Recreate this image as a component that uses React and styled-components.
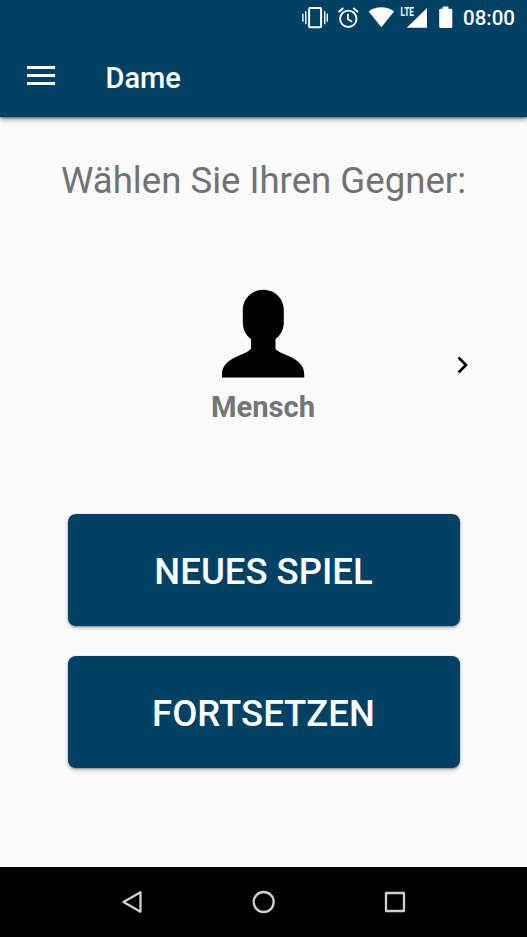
import React from "react";
import styled, { createGlobalStyle } from "styled-components";

const NAVY = "#004165";

const GlobalStyle = createGlobalStyle`
  body { margin: 0; background: #fafafa; }
  *, *::before, *::after { box-sizing: border-box; }
`;

const Screen = styled.div`
  display: flex;
  flex-direction: column;
  width: 527px;
  height: 937px;
  background: #fafafa;
  font-family: Roboto, sans-serif;
  overflow: hidden;
`;

const Header = styled.header`
  flex: none;
  height: 117px;
  background: ${NAVY};
  color: #fff;
  box-shadow: 0 1px 2px rgba(0, 0, 0, 0.45), 0 3px 5px rgba(0, 0, 0, 0.3);
`;

const StatusBar = styled.div`
  display: flex;
  align-items: center;
  justify-content: flex-end;
  height: 35px;
  padding-right: 12px;
`;

const StatusIcon = styled.svg`
  flex: none;
  display: block;
  width: ${(p) => p.$width}px;
  height: 35px;
  margin-right: ${(p) => p.$gap}px;
`;

const Network = styled.text`
  font: 700 12.5px Roboto, sans-serif;
`;

const Clock = styled.span`
  width: 52px;
  font-size: 20.5px;
  font-weight: 500;
  line-height: 35px;
  padding-top: 1px;
  white-space: nowrap;
`;

const AppBar = styled.div`
  display: flex;
  align-items: center;
  height: 82px;
  padding-left: 27px;
`;

const MenuButton = styled.button`
  display: flex;
  width: 28px;
  height: 20px;
  margin: 0 50.5px 0 0;
  padding: 0;
  border: 0;
  background: none;
  color: inherit;
`;

const Title = styled.h1`
  margin: 4px 0 0;
  font-size: 29px;
  font-weight: 500;
  line-height: 34px;
`;

const Main = styled.main`
  flex: 1;
  display: flex;
  flex-direction: column;
  align-items: center;
  width: 526px;
`;

const Heading = styled.h2`
  margin: 42px 0 0 1px;
  color: #727272;
  font-size: 36.6px;
  font-weight: 400;
  line-height: 44px;
  white-space: nowrap;
`;

const Picker = styled.section`
  display: grid;
  grid-template-columns: 1fr 104px 1fr;
  align-items: center;
  width: 100%;
  height: 152px;
  margin-top: 86px;
`;

const Opponent = styled.div`
  grid-column: 2;
  display: flex;
  flex-direction: column;
  align-items: center;
  height: 152px;
`;

const OpponentName = styled.span`
  margin-top: 12px;
  color: #757575;
  font-size: 29.2px;
  font-weight: 700;
  line-height: 34px;
`;

const NextButton = styled.button`
  display: flex;
  justify-self: end;
  margin: 0 57px 1px 0;
  padding: 0;
  border: 0;
  background: none;
`;

const Actions = styled.div`
  display: flex;
  flex-direction: column;
  gap: 30px;
  margin: 73px 0 0 1px;
`;

const ActionButton = styled.button`
  width: 392px;
  height: 112px;
  padding: 3px 0 0;
  border: 0;
  border-radius: 8px;
  background: ${NAVY};
  color: #fff;
  font: 500 36.5px/44px Roboto, sans-serif;
  box-shadow: 0 1px 2px rgba(0, 0, 0, 0.3), 0 2px 4px rgba(0, 0, 0, 0.22);
`;

const NavBar = styled.nav`
  flex: none;
  display: flex;
  justify-content: space-between;
  align-items: center;
  height: 70px;
  padding: 0 120px;
  background: #000;
`;

const NavIcon = styled.svg`
  display: block;
  width: 24px;
  height: 24px;
  fill: none;
  stroke: #cfcfcf;
  stroke-width: 2.3;
  stroke-linejoin: round;
`;

function StatusIcons() {
  return (
    <>
      <StatusIcon $width={26} $gap={10} viewBox="302 0 26 35" fill="none" stroke="#fff">
        <rect x="309.1" y="8" width="12" height="19.2" rx="1" strokeWidth="2" />
        <path d="M305.8 11.2v13M324.7 11.2v13M302.9 13.8v8M327.3 13.8v8" strokeWidth="1.4" />
      </StatusIcon>
      <StatusIcon $width={21} $gap={9} viewBox="338 0 21 35" fill="none" stroke="#fff" strokeWidth="1.9">
        <circle cx="348.3" cy="18.8" r="8.2" />
        <path d="M338.6 12l4.7-4M358 12l-4.7-4" />
        <path d="M347.9 13.8v5.4l4.3 2.6" strokeWidth="1.6" />
      </StatusIcon>
      <StatusIcon $width={27} $gap={5} viewBox="368 0 27 35" fill="#fff">
        <path d="M381.3 27.3L368.7 11.4Q374 7.2 381.3 7.2T394 11.4Z" />
      </StatusIcon>
      <StatusIcon $width={28} $gap={10} viewBox="400 0 28 35" fill="#fff">
        <path d="M427 8v19.8h-20.2Z" />
        <rect x="400" y="6" width="15.300" height="11.500" fill={NAVY} />
        <Network x="400.6" y="16.2" textLength="13.4" lengthAdjust="spacingAndGlyphs">LTE</Network>
      </StatusIcon>
      <StatusIcon $width={15} $gap={10} viewBox="438 0 15 35" fill="#fff">
        <path d="M442.600 6.6h5.800v2.2h2.600q1.3 0 1.3 1.3v16.6q0 1.3-1.3 1.3h-10.500q-1.300 0-1.300-1.300V10.100q0-1.300 1.300-1.300h2.100Z" />
      </StatusIcon>
    </>
  );
}

export default function App() {
  return (
    <>
      <GlobalStyle />
      <Screen>
        <Header>
          <StatusBar>
            <StatusIcons />
            <Clock>08:00</Clock>
          </StatusBar>
          <AppBar>
            <MenuButton aria-label="Menü">
              <svg width="28" height="20" viewBox="0 0 28 20" fill="#fff">
                <path d="M0 0h28v3H0zM0 8h28v3H0zM0 16h28v3H0z" />
              </svg>
            </MenuButton>
            <Title>Dame</Title>
          </AppBar>
        </Header>
        <Main>
          <Heading>Wählen Sie Ihren Gegner:</Heading>
          <Picker>
            <Opponent>
              <svg width="84" height="89" viewBox="0 0 84 89">
                <path d="M42.300 .8C53.500 .8 62.800 9.500 62.800 21V33C62.800 40.500 59.500 46.500 54.500 50V60C57.500 63 62 64.500 67 66.700C78 71.500 83.200 77 83.200 85V88.500H1V85C1 77 6.500 71.500 17.500 66.700C22.500 64.500 27 63 30 60V50C25 46.500 21.800 40.500 21.800 33V21C21.800 9.500 31.100 .8 42.300 .8Z" />
              </svg>
              <OpponentName>Mensch</OpponentName>
            </Opponent>
            <NextButton aria-label="Weiter">
              <svg width="12" height="18" viewBox="0 0 12 18" fill="none" stroke="#000" strokeWidth="2.700">
                <path d="M1.500 1.500L9 9L1.500 16.500" />
              </svg>
            </NextButton>
          </Picker>
          <Actions>
            <ActionButton>NEUES SPIEL</ActionButton>
            <ActionButton>FORTSETZEN</ActionButton>
          </Actions>
        </Main>
        <NavBar>
          <NavIcon viewBox="0 0 24 24"><path d="M3.500 12L20.500 2.200V21.800Z" /></NavIcon>
          <NavIcon viewBox="0 0 24 24"><circle cx="11.700" cy="12" r="10" /></NavIcon>
          <NavIcon viewBox="0 0 24 24"><rect x="3" y="3" width="18" height="18" /></NavIcon>
        </NavBar>
      </Screen>
    </>
  );
}
